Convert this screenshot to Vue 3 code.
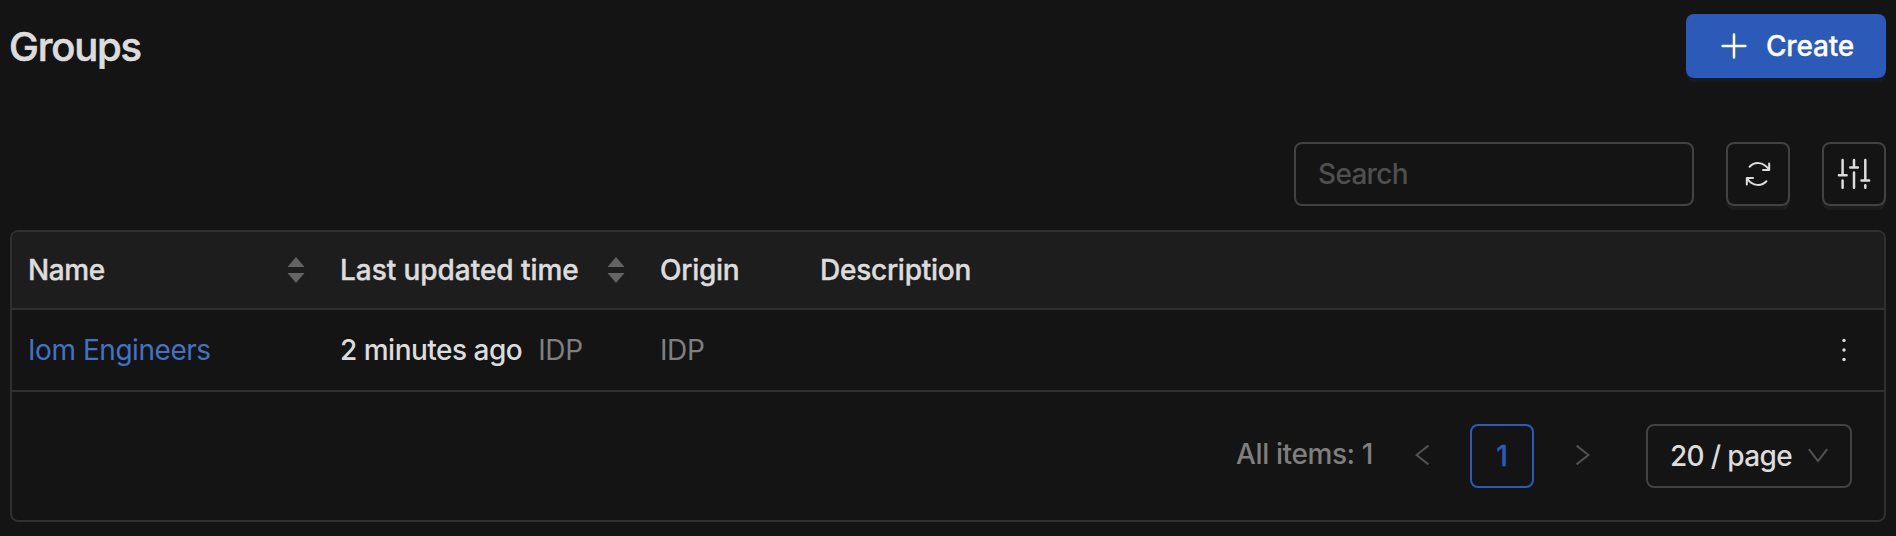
<script setup>
const columns = [
  { key: 'name', label: 'Name', sort: true },
  { key: 'updated', label: 'Last updated time', sort: true },
  { key: 'origin', label: 'Origin', sort: false },
  { key: 'description', label: 'Description', sort: false },
]
const rows = [{ name: 'Iom Engineers', updated: '2 minutes ago', by: 'IDP', origin: 'IDP' }]
</script>

<template>
  <main class="page">
    <header class="top">
      <h1><span class="t title">Groups</span></h1>
      <button class="create">
        <svg width="28" height="28" viewBox="0 0 28 28" fill="none" stroke="currentColor" stroke-width="2.5" stroke-linecap="round">
          <path d="M14 2.6V25.4M2.6 14H25.4" />
        </svg>
        <span class="t label">Create</span>
      </button>
    </header>

    <div class="toolbar">
      <div class="search"><span class="t placeholder">Search</span></div>
      <button class="tool">
        <svg width="60" height="60" viewBox="2 2 60 60" fill="none" stroke="currentColor" stroke-width="2" stroke-linecap="round" stroke-linejoin="round">
          <path d="M23.6 24.8C28.6 19.4 37 19.6 42.8 27.2M43.2 21.6V28H37" />
          <path d="M40.4 39.2C35.4 44.6 27 44.4 21.2 36.8M20.8 42.4V36H27" />
        </svg>
      </button>
      <button class="tool">
        <svg width="60" height="60" viewBox="2 2 60 60" fill="none" stroke="currentColor" stroke-width="2.5" stroke-linecap="round">
          <path d="M20.6 18V33.2M16.9 33.2H24.6M20.6 38.6V45.8" />
          <path d="M32 18V25.6M28.3 25.6H35.9M32 30.4V45.8" />
          <path d="M43.3 18V38.4M39.5 38.4H47.1M43.3 43.2V45.8" />
        </svg>
      </button>
    </div>

    <section class="table">
      <div class="row head">
        <div v-for="c in columns" :key="c.key" class="cell" :class="'h-' + c.key">
          <span class="t">{{ c.label }}</span>
          <svg v-if="c.sort" class="sorter" width="18" height="28" viewBox="0 0 18 28" fill="#646464">
            <path d="M9 1L17.5 11H.5zM9 27L17.5 17H.5z" />
          </svg>
        </div>
      </div>
      <div v-for="r in rows" :key="r.name" class="row body">
        <div class="cell"><a class="t link">{{ r.name }}</a></div>
        <div class="cell"><span class="t ago">{{ r.updated }}</span><span class="t muted idp">{{ r.by }}</span></div>
        <div class="cell"><span class="t muted idp">{{ r.origin }}</span></div>
        <div class="cell menu">
          <svg width="8" height="28" viewBox="0 0 8 28" fill="#dcdcdc">
            <circle cx="4" cy="4.4" r="1.7" /><circle cx="4" cy="14" r="1.7" /><circle cx="4" cy="23.5" r="1.7" />
          </svg>
        </div>
      </div>
      <footer class="pager">
        <span class="t total">All items: 1</span>
        <svg class="prev" width="14" height="22" viewBox="0 0 14 22" fill="none" stroke="#515151" stroke-width="2"><path d="M13.4 1.6L1.6 11L13.4 20.4" /></svg>
        <span class="current"><span class="t">1</span></span>
        <svg class="next" width="14" height="22" viewBox="0 0 14 22" fill="none" stroke="#515151" stroke-width="2"><path d="M.6 1.6L12.4 11L.6 20.4" /></svg>
        <div class="size">
          <span class="t pages">20 / page</span>
          <svg width="20" height="16" viewBox="0 0 20 16" fill="none" stroke="#515151" stroke-width="2"><path d="M.8 1.2L10 13.2L19.2 1.2" /></svg>
        </div>
      </footer>
    </section>
  </main>
</template>

<style>
body { background: #141414; }
</style>

<style scoped>
.page {
  box-sizing: border-box;
  height: 536px;
  padding: 14px 10px;
  overflow: hidden;
  background: #141414;
  color: #dcdcdc;
  font: 500 28px/44px Inter, "Liberation Sans", sans-serif;
}
.t { white-space: nowrap; }
.top { display: flex; justify-content: space-between; align-items: center; height: 64px; }
h1 { margin: 2px 0 0 -1px; font-size: 40px; font-weight: 500; line-height: 64px; }
.title { letter-spacing: -1.2px; -webkit-text-stroke: .6px currentColor; }
button { box-sizing: border-box; margin: 0; font: inherit; color: inherit; }
.create {
  display: flex;
  align-items: center;
  width: 200px;
  height: 64px;
  padding: 0 0 0 34px;
  border: 0;
  border-radius: 8px;
  background: #2b5ab8;
  box-shadow: 0 4px 0 #151a27;
  color: #fff;
}
.label { margin-left: 18px; letter-spacing: -.2px; -webkit-text-stroke: .3px currentColor; }
.toolbar { display: flex; justify-content: flex-end; gap: 32px; margin-top: 64px; }
.search {
  box-sizing: border-box;
  display: flex;
  align-items: center;
  width: 400px;
  height: 64px;
  padding-left: 22px;
  border: 2px solid #424242;
  border-radius: 8px;
  color: #4f4f4f;
}
.placeholder { letter-spacing: -.7px; }
.tool {
  width: 64px;
  height: 64px;
  padding: 0;
  border: 2px solid #424242;
  border-radius: 8px;
  background: #141414;
  box-shadow: 0 4px 0 #1c1c1c;
}
.tool svg { display: block; }
.table {
  box-sizing: border-box;
  height: 292px;
  margin-top: 24px;
  border: 2px solid #303030;
  border-radius: 8px;
  overflow: hidden;
}
.row { display: grid; grid-template-columns: 312px 320px 160px 1fr; border-bottom: 2px solid #303030; }
.cell { display: flex; align-items: center; padding: 0 16px; }
.head { height: 76px; background: #1d1d1d; letter-spacing: -.25px; -webkit-text-stroke: .4px currentColor; }
.head .cell { justify-content: space-between; }
.h-name { letter-spacing: -.4px; }
.h-updated { letter-spacing: -.05px; }
.sorter { margin-right: 3px; }
.body { height: 80px; }
.link { color: #4372c4; font-weight: 400; letter-spacing: -.45px; }
.ago { letter-spacing: -.5px; }
.muted { color: #7f7f7f; font-weight: 400; }
.ago + .idp { margin-left: 16px; }
.idp { letter-spacing: -.4px; }
.menu { justify-content: flex-end; padding-right: 36px; }
.pager { display: flex; align-items: center; height: 64px; padding: 32px 32px 0 0; justify-content: flex-end; }
.total { color: #7f7f7f; margin: -4px 42px 0 0; letter-spacing: -.4px; }
.prev { margin: -2px 41px 0 0; }
.current {
  box-sizing: border-box;
  width: 64px;
  height: 64px;
  border: 2px solid #2b5ab8;
  border-radius: 8px;
  color: #2b5ab8;
  line-height: 60px;
  text-align: center;
  -webkit-text-stroke: .4px currentColor;
}
.next { margin: -2px 56px 0 42px; }
.size {
  box-sizing: border-box;
  display: flex;
  align-items: center;
  justify-content: space-between;
  width: 206px;
  height: 64px;
  padding: 0 22px;
  border: 2px solid #424242;
  border-radius: 8px;
}
.pages { letter-spacing: -.65px; }
</style>
